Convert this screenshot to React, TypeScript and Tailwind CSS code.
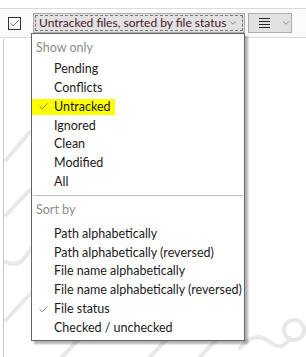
import { Check, ChevronDown } from 'lucide-react';

const showOnly = ['Pending', 'Conflicts', 'Untracked', 'Ignored', 'Clean', 'Modified', 'All'];
const sortBy = [
  'Path alphabetically',
  'Path alphabetically (reversed)',
  'File name alphabetically',
  'File name alphabetically (reversed)',
  'File status',
  'Checked / unchecked',
];

function Item({ label, checked, highlight }: { label: string; checked?: boolean; highlight?: boolean }) {
  return (
    <div className="h-[18.8px] flex items-center">
      <div className={`flex items-center h-[16px] pr-[4px] ${highlight ? 'bg-[#ffff00]' : ''}`}>
        <span className="w-[22px] flex justify-center">
          {checked && <Check size={11} strokeWidth={1.3} className="text-[#333]" />}
        </span>
        <span className="text-[12.5px] text-[#1a1a1a] leading-none whitespace-nowrap">{label}</span>
      </div>
    </div>
  );
}

export default function App() {
  return (
    <div className="relative w-[306px] h-[357px] overflow-hidden bg-white" style={{ fontFamily: 'Lato, "Noto Sans", sans-serif' }}>
      <svg className="absolute left-0 top-0" width="306" height="357" fill="none" stroke="#e8e8e8" strokeWidth="4" strokeLinecap="round">
        <path d="M6 160 L30 132" />
        <path d="M6 215 Q20 200 30 190" />
        <path d="M6 262 Q18 268 26 256 L34 244" />
        <path d="M6 320 L32 292" />
        <path d="M62 357 L80 338" />
        <path d="M150 357 L170 336" />
        <path d="M200 357 L220 336" />
        <path d="M240 348 Q255 330 270 342 Q282 352 290 338" />
        <circle cx="294" cy="330" r="10" />
      </svg>

      <div className="relative h-[9px] border-b border-[#dadada]" />
      <div className="relative h-[29px] bg-[#fafafa] border-b border-[#d8d8d8] flex items-center">
        <div className="ml-[8px] w-[13px] h-[13px] border border-[#333] bg-white flex items-center justify-center">
          <Check size={11} strokeWidth={1.5} className="text-[#222]" />
        </div>
        <div className="ml-[12px] w-[212px] h-[20px] bg-[#e1e1e1] border border-[#adadad] p-[1px]">
          <div className="h-full border border-dashed border-[#7a7a7a] flex items-center pl-[3px] pr-[4px]">
            <span className="text-[12px] text-[#4a1828] leading-none flex-1 whitespace-nowrap">Untracked files, sorted by file status</span>
            <ChevronDown size={10} strokeWidth={1.3} className="text-[#444]" />
          </div>
        </div>
        <div className="ml-[3px] w-[44px] h-[20px] bg-[#e1e1e1] border border-[#adadad] flex items-center pl-[10px] gap-[11px]">
          <svg width="11" height="10" viewBox="0 0 11 10" stroke="#222" strokeWidth="1">
            <path d="M0 0.5H11M0 3.5H11M0 6.5H11M0 9.5H11" />
          </svg>
          <ChevronDown size={10} strokeWidth={1.3} className="text-[#444]" />
        </div>
      </div>
      <div className="absolute left-[3px] top-[39px] bottom-0 w-px bg-[#c8c8c8]" />

      <div className="absolute left-[31px] top-[33px] w-[214px] h-[308px] bg-white border border-[#646464] shadow-[3px_3px_2px_rgba(0,0,0,0.3)] pt-[5px]">
        <div className="h-[18px] flex items-center pl-[4px] text-[12.5px] text-[#8c8c8c] leading-none">Show only</div>
        <div className="pt-[3px]">
          {showOnly.map((s) => (
            <Item key={s} label={s} checked={s === 'Untracked'} highlight={s === 'Untracked'} />
          ))}
        </div>
        <div className="mx-[1px] mt-[3px] h-px bg-[#b9bec4]" />
        <div className="h-[22px] mt-[4px] flex items-center pl-[4px] text-[12.5px] text-[#8c8c8c] leading-none">Sort by</div>
        <div className="pt-[3px]">
          {sortBy.map((s) => (
            <Item key={s} label={s} checked={s === 'File status'} />
          ))}
        </div>
      </div>
    </div>
  );
}
